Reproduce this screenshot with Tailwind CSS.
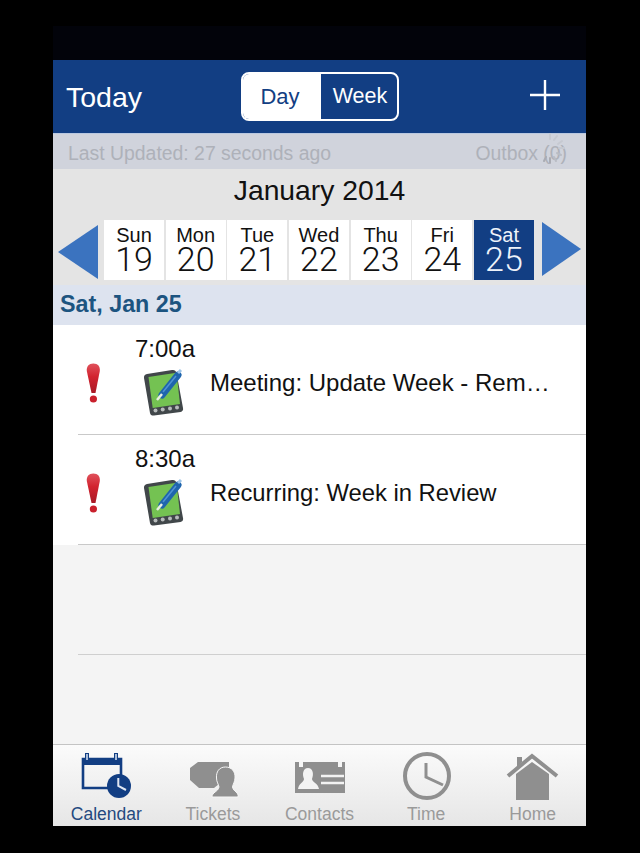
<!doctype html>
<html><head><meta charset="utf-8"><script src="https://cdn.jsdelivr.net/npm/@tailwindcss/browser@4"></script></head>
<body class="bg-black">
<div class="w-[640px] h-[853px] bg-black pt-[26px] pl-[53px] font-['Liberation_Sans',sans-serif] overflow-hidden">
<div class="w-[533px] h-[800px] flex flex-col relative">
  <div class="h-[34px] bg-[#02030a]"></div>
  <header class="h-[74px] bg-[#123e83] border-b border-[#b9c8e0] flex items-center relative">
    <span class="ml-[13px] text-[28.5px] leading-none text-white mt-[2px]">Today</span>
    <div class="absolute left-[188px] top-[12px] w-[158px] h-[49px] rounded-[8px] border-2 border-white flex overflow-hidden">
      <div class="w-[78px] bg-white text-[#123e83] text-[22px] pr-[4px] flex items-center justify-center">Day</div>
      <div class="flex-1 text-white text-[21.5px] pl-[2px] flex items-center justify-center">Week</div>
    </div>
    <svg class="absolute left-[477px] top-[20px]" width="30" height="30" viewBox="0 0 30 30"><path d="M0 15H30M15 0V30" stroke="#fff" stroke-width="2.4"/></svg>
  </header>
  <div class="h-[35px] bg-[#d0d3dc] flex items-center justify-between pl-[15px] pr-[19px] pt-[4px] text-[19.4px] text-[#aeb1b9] relative">
    <span>Last Updated: 27 seconds ago</span><span>Outbox (0)</span>
    <svg class="absolute left-[479px] top-[-3px]" width="36" height="36" viewBox="0 0 36 36" stroke-width="2" stroke-linecap="round"><path d="M18 3V8M25 5L22 9M30 10L26 13M32 17H27" stroke="#c6c9d1"/><path d="M29 24L25 22M24 30L22 26" stroke="#b9bcc4"/><path d="M18 32V27M12 30L14 26" stroke="#a9abb3"/></svg>
  </div>
  <div class="h-[116px] bg-[#e4e4e4] flex flex-col">
    <div class="h-[51px] flex items-start justify-center text-[28.3px] leading-[32px] text-[#111] pt-[5px]">January 2014</div>
    <div class="flex items-start relative pl-[51px] gap-[1.67px]">
      <svg class="absolute left-[5px] top-[5px]" width="40" height="54" viewBox="0 0 40 54"><path d="M0 27L40 0V54Z" fill="#3b73bf"/></svg>
      <div class="w-[60px] h-[60px] bg-white flex flex-col items-center text-[#111]"><span class="text-[20px] leading-[22px] mt-[4px]">Sun</span><span class="text-[34px] leading-[26px] font-['Roboto'] font-light">19</span></div>
      <div class="w-[60px] h-[60px] bg-white flex flex-col items-center text-[#111]"><span class="text-[20px] leading-[22px] mt-[4px]">Mon</span><span class="text-[34px] leading-[26px] font-['Roboto'] font-light">20</span></div>
      <div class="w-[60px] h-[60px] bg-white flex flex-col items-center text-[#111]"><span class="text-[20px] leading-[22px] mt-[4px]">Tue</span><span class="text-[34px] leading-[26px] font-['Roboto'] font-light">21</span></div>
      <div class="w-[60px] h-[60px] bg-white flex flex-col items-center text-[#111]"><span class="text-[20px] leading-[22px] mt-[4px]">Wed</span><span class="text-[34px] leading-[26px] font-['Roboto'] font-light">22</span></div>
      <div class="w-[60px] h-[60px] bg-white flex flex-col items-center text-[#111]"><span class="text-[20px] leading-[22px] mt-[4px]">Thu</span><span class="text-[34px] leading-[26px] font-['Roboto'] font-light">23</span></div>
      <div class="w-[60px] h-[60px] bg-white flex flex-col items-center text-[#111]"><span class="text-[20px] leading-[22px] mt-[4px]">Fri</span><span class="text-[34px] leading-[26px] font-['Roboto'] font-light">24</span></div>
      <div class="w-[60px] h-[60px] bg-[#123e83] flex flex-col items-center text-[#eef3fa]"><span class="text-[20px] leading-[22px] mt-[4px]">Sat</span><span class="text-[34px] leading-[26px] font-['Roboto'] font-light">25</span></div>
      <svg class="absolute left-[489px] top-[2px]" width="39" height="54" viewBox="0 0 39 54"><path d="M39 27L0 0V54Z" fill="#3b73bf"/></svg>
    </div>
  </div>
  <div class="h-[40px] bg-[#dde3ef] flex items-center pl-[7px] pb-[2px] text-[23.3px] font-bold text-[#1c5480]">Sat, Jan 25</div>
  <div class="h-[110px] bg-white relative">
    <div class="absolute left-[25px] right-0 bottom-0 h-px bg-[#c9c9c9]"></div>
    <span class="absolute left-[82px] top-[11px] text-[24px] leading-[26px] text-[#111]">7:00a</span>
    <svg class="absolute left-[31px] top-[38px]" width="19" height="42" viewBox="0 0 19 42"><defs><linearGradient id="red1" x1="0" y1="0" x2="0" y2="1"><stop offset="0" stop-color="#e0525c"/><stop offset=".45" stop-color="#d2232f"/><stop offset="1" stop-color="#a81a26"/></linearGradient></defs><path d="M9.3 0.5C14 0.5 16.3 3.5 15.8 8L11.5 30H7.5L2.8 8C2.3 3.5 4.8 0.5 9.3 0.5Z" fill="url(#red1)"/><circle cx="9.4" cy="36" r="3.6" fill="#c9202c"/></svg>
    <svg class="absolute left-[90px] top-[43px]" width="42" height="49" viewBox="0 0 42 49"><path d="M4 6L29 2C31 1.500 33 2.500 33.500 5L40 40C40.500 42 39.500 43.500 37.500 44L11 47.500C9 47.800 7.500 47 7 45L1 10C0.700 8 2 6.300 4 6Z" fill="#41474a"/><path d="M5.500 9L33.500 4.700L37 36L9.700 40Z" fill="#74c252"/><circle cx="12.500" cy="42.500" r="2" fill="#b8bcbc"/><circle cx="19.700" cy="41.500" r="2" fill="#b8bcbc"/><circle cx="27" cy="40.500" r="2" fill="#b8bcbc"/><circle cx="34" cy="39.500" r="2" fill="#b8bcbc"/><path d="M19 27L35 7" stroke="#1f65ad" stroke-width="7" stroke-linecap="round"/><path d="M20 24L33 8" stroke="#4f93d4" stroke-width="1.500"/><path d="M19 26L14 32" stroke="#e8efe4" stroke-width="2.500"/><path d="M35 5L38 2" stroke="#9cc4e8" stroke-width="3"/></svg>
    <span class="absolute left-[157px] top-[44px] text-[24px] leading-[28px] text-[#111]">Meeting: Update Week - Rem…</span>
  </div>
  <div class="h-[110px] bg-white relative">
    <div class="absolute left-[25px] right-0 bottom-0 h-px bg-[#c9c9c9]"></div>
    <span class="absolute left-[82px] top-[11px] text-[24px] leading-[26px] text-[#111]">8:30a</span>
    <svg class="absolute left-[31px] top-[38px]" width="19" height="42" viewBox="0 0 19 42"><path d="M9.3 0.5C14 0.5 16.3 3.5 15.8 8L11.5 30H7.5L2.8 8C2.3 3.5 4.8 0.5 9.3 0.5Z" fill="url(#red1)"/><circle cx="9.4" cy="36" r="3.6" fill="#c9202c"/></svg>
    <svg class="absolute left-[90px] top-[43px]" width="42" height="49" viewBox="0 0 42 49"><path d="M4 6L29 2C31 1.500 33 2.500 33.500 5L40 40C40.500 42 39.500 43.500 37.500 44L11 47.500C9 47.800 7.500 47 7 45L1 10C0.700 8 2 6.300 4 6Z" fill="#41474a"/><path d="M5.500 9L33.500 4.700L37 36L9.700 40Z" fill="#74c252"/><circle cx="12.500" cy="42.500" r="2" fill="#b8bcbc"/><circle cx="19.700" cy="41.500" r="2" fill="#b8bcbc"/><circle cx="27" cy="40.500" r="2" fill="#b8bcbc"/><circle cx="34" cy="39.500" r="2" fill="#b8bcbc"/><path d="M19 27L35 7" stroke="#1f65ad" stroke-width="7" stroke-linecap="round"/><path d="M20 24L33 8" stroke="#4f93d4" stroke-width="1.500"/><path d="M19 26L14 32" stroke="#e8efe4" stroke-width="2.500"/><path d="M35 5L38 2" stroke="#9cc4e8" stroke-width="3"/></svg>
    <span class="absolute left-[157px] top-[44px] text-[23.8px] leading-[28px] text-[#111]">Recurring: Week in Review</span>
  </div>
  <div class="h-[199px] bg-[#f4f4f4] relative"><div class="absolute left-[25px] right-0 top-[109px] h-px bg-[#cfcfcf]"></div></div>
  <nav class="h-[82px] border-t border-[#c4c4c4] bg-gradient-to-b from-[#fbfbfb] to-[#e6e6e6] grid grid-cols-5 text-[17.500px] leading-[20px] text-[#9a9a9a]">
    <div class="flex flex-col items-center justify-end pb-[2px] relative text-[#24497f]">
      <svg class="absolute left-[27px] top-[7px]" width="52" height="48" viewBox="0 0 52 48"><path d="M3 7H41V36H3Z" fill="none" stroke="#123e83" stroke-width="2.600"/><path d="M2 6H42V13H2Z" fill="#123e83"/><path d="M7 1V9M36 1V9" stroke="#123e83" stroke-width="4"/><path d="M7 2V8M36 2V8" stroke="#a9bcd8" stroke-width="2"/><circle cx="39" cy="34" r="12" fill="#123e83"/><path d="M38.300 26V34L46 38" stroke="#dfe6f2" stroke-width="2" fill="none"/></svg>
      <span>Calendar</span>
    </div>
    <div class="flex flex-col items-center justify-end pb-[2px] relative">
      <svg class="absolute left-[29px] top-[15px]" width="52" height="41" viewBox="0 0 52 41"><path d="M9 2H40V8C33 10 29 16 30 24L25 28H10L1 20V8Z" fill="#8f8f8f"/><path d="M36.500 7C43 7 46.500 12 46 18C45.800 22 44 24 43.500 27C44.500 32 50 32 49 37H23C23 32 29 32 30 27C29.500 24 27.500 22 27.500 18C27 12 30 7 36.500 7Z" fill="#8f8f8f" stroke="#f6f6f6" stroke-width="1"/></svg>
      <span>Tickets</span>
    </div>
    <div class="flex flex-col items-center justify-end pb-[2px] relative">
      <svg class="absolute left-[28px] top-[14px]" width="52" height="36" viewBox="0 0 52 36"><path d="M1 3H5V8H9V3H44V8H48V3H51V34H1Z" fill="#8f8f8f"/><path d="M14 9C19 9 20 15 18 20C18 23 24 24 25 30H4C5 24 10 23 10 20C8 15 9 9 14 9Z" fill="#f3f3f3"/><path d="M27 17H50M27 24H50" stroke="#f3f3f3" stroke-width="2.500"/></svg>
      <span>Contacts</span>
    </div>
    <div class="flex flex-col items-center justify-end pb-[2px] relative">
      <svg class="absolute left-[29px] top-[6px]" width="50" height="50" viewBox="0 0 50 50"><circle cx="25" cy="25" r="22" fill="none" stroke="#8f8f8f" stroke-width="4"/><path d="M24 12V26L41 34" fill="none" stroke="#8f8f8f" stroke-width="3"/></svg>
      <span>Time</span>
    </div>
    <div class="flex flex-col items-center justify-end pb-[2px] relative">
      <svg class="absolute left-[26px] top-[8px]" width="54" height="48" viewBox="0 0 54 48"><path d="M12 4H17V9L12 14Z" fill="#8f8f8f"/><path d="M3 23L27 3L52 23" fill="none" stroke="#8f8f8f" stroke-width="4"/><path d="M11 21L27 9L44 21V47H11Z" fill="#8f8f8f"/></svg>
      <span>Home</span>
    </div>
  </nav>
</div>
</div>
</body></html>
